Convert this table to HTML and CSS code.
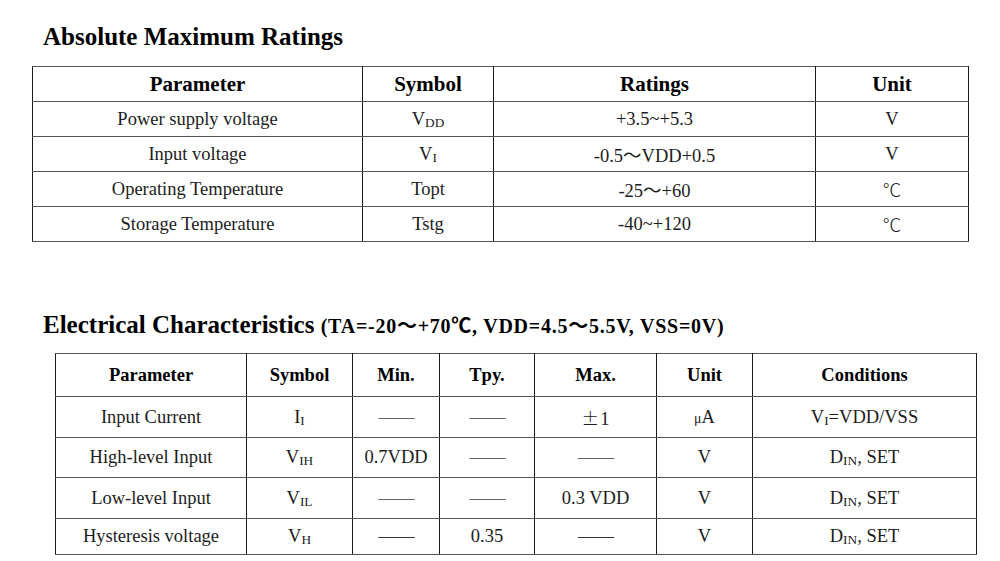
FILE: index.html
```html
<!DOCTYPE html>
<html>
<head>
<meta charset="utf-8">
<link rel="stylesheet" href="styles.css">
</head>
<body>
<h2 class="title t1">Absolute Maximum Ratings</h2>
<table class="tbl amr">
  <colgroup>
    <col class="c-param"><col class="c-sym"><col class="c-rat"><col class="c-unit">
  </colgroup>
  <tr class="hdr"><th>Parameter</th><th>Symbol</th><th>Ratings</th><th>Unit</th></tr>
  <tr><td>Power supply voltage</td><td>V<span class="sub">DD</span></td><td>+3.5~+5.3</td><td>V</td></tr>
  <tr><td>Input voltage</td><td>V<span class="sub">I</span></td><td>-0.5～VDD+0.5</td><td>V</td></tr>
  <tr><td>Operating Temperature</td><td>Topt</td><td>-25～+60</td><td><span class="cjk">℃</span></td></tr>
  <tr><td>Storage Temperature</td><td>Tstg</td><td>-40~+120</td><td><span class="cjk">℃</span></td></tr>
</table>

<h2 class="title t2">Electrical Characteristics <span class="cond">(TA=-20～+70℃, VDD=4.5～5.5V, VSS=0V)</span></h2>
<table class="tbl ec">
  <colgroup>
    <col class="e-param"><col class="e-sym"><col class="e-min"><col class="e-typ"><col class="e-max"><col class="e-unit"><col class="e-cond">
  </colgroup>
  <tr class="hdr"><th>Parameter</th><th>Symbol</th><th>Min.</th><th>Tpy.</th><th>Max.</th><th>Unit</th><th>Conditions</th></tr>
  <tr class="r1"><td>Input Current</td><td>I<span class="sub">I</span></td><td><span class="dash">——</span></td><td><span class="dash">——</span></td><td><span class="cjk pm">±</span>1</td><td><span class="mu">μ</span>A</td><td>V<span class="sub">I</span>=VDD/VSS</td></tr>
  <tr class="r2"><td>High-level Input</td><td>V<span class="sub">IH</span></td><td>0.7VDD</td><td><span class="dash">——</span></td><td><span class="dash">——</span></td><td>V</td><td>D<span class="sub">IN</span>, SET</td></tr>
  <tr class="r3"><td>Low-level Input</td><td>V<span class="sub">IL</span></td><td><span class="dash">——</span></td><td><span class="dash">——</span></td><td>0.3 VDD</td><td>V</td><td>D<span class="sub">IN</span>, SET</td></tr>
  <tr class="r4"><td>Hysteresis voltage</td><td>V<span class="sub">H</span></td><td><span class="dash bold">——</span></td><td>0.35</td><td><span class="dash bold">——</span></td><td>V</td><td>D<span class="sub">IN</span>, SET</td></tr>
</table>
</body>
</html>
```

FILE: styles.css
```css
html, body {
  margin: 0;
  padding: 0;
  background: #ffffff;
}
body {
  font-family: "Liberation Serif", "Noto Sans CJK SC", serif;
  color: #1c1c1c;
}
.title {
  font-size: 25px;
  line-height: 30px;
  font-weight: bold;
  color: #000;
  margin: 0;
  padding-left: 43px;
}
.t1 {
  padding-top: 22px;
}
.t2 {
  margin-top: 68px;
}
.cond {
  font-size: 20px;
  letter-spacing: 0.75px;
}
.tbl {
  border-collapse: collapse;
  table-layout: fixed;
}
.tbl th, .tbl td {
  border-left: 1px solid #1a1a1a;
  border-right: 1px solid #1a1a1a;
  border-top: 1px solid #555;
  border-bottom: 1px solid #555;
  text-align: center;
  vertical-align: middle;
  padding: 0;
  white-space: nowrap;
}
.tbl th {
  color: #000;
  font-weight: bold;
}
.amr {
  margin-top: 14px;
  margin-left: 32px;
  width: 937px;
  font-size: 18.5px;
}
.amr th {
  font-size: 21px;
}
.amr tr {
  height: 35px;
}
.c-param { width: 330px; }
.c-sym { width: 131px; }
.c-rat { width: 322px; }
.c-unit { width: 153px; }

.ec {
  margin-top: 12px;
  margin-left: 55px;
  width: 922px;
  font-size: 18.5px;
}
.ec th {
  font-size: 18.5px;
}
.ec .hdr { height: 43px; }
.ec .r1 { height: 41px; }
.ec .r2 { height: 40px; }
.ec .r3 { height: 41px; }
.ec .r4 { height: 36px; }
.e-param { width: 191px; }
.e-sym { width: 106px; }
.e-min { width: 87px; }
.e-typ { width: 95px; }
.e-max { width: 122px; }
.e-unit { width: 96px; }
.e-cond { width: 224px; }

.sub {
  font-size: 0.72em;
  vertical-align: -0.12em;
  line-height: 1;
}
.cjk {
  font-family: "Noto Sans CJK SC", sans-serif;
  font-weight: 300;
}
.pm {
  font-size: 0.95em;
  margin-right: 1px;
}
.mu {
  font-size: 0.75em;
}
.dash {
  color: #666;
  letter-spacing: -1px;
}
.dash.bold {
  color: #333;
}
```
